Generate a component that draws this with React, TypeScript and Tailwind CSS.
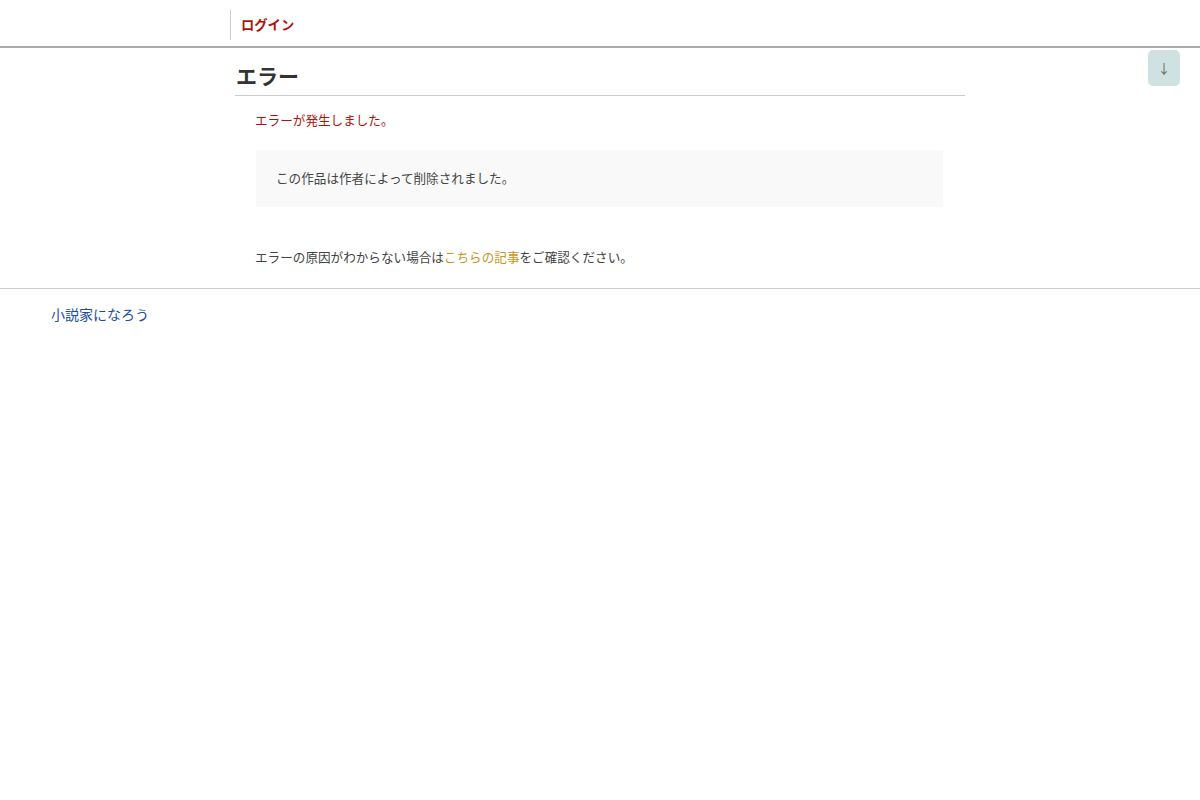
import React from 'react';

const font = "font-['Noto_Sans_CJK_JP','Noto_Sans',sans-serif]";

export default function App() {
    return (
        <div className={`min-h-[800px] bg-white text-[#444] ${font}`}>
            <header className="h-[48px] border-b-2 border-[#aaa] flex items-center pt-[3px]">
                <div className="ml-[230px] border-l border-[#ccc] h-[30px] flex items-center pl-[10px]">
                    <a className="text-[#b0120a] font-bold text-[13.3px]">ログイン</a>
                </div>
            </header>
            <div className="relative">
                <button className="absolute right-[20px] top-[2px] w-[32px] h-[36px] rounded-[5px] bg-[#cfe1e1] text-[#666] text-[13px] flex items-center justify-center">
                    ↓
                </button>
                <main className="w-[730px] ml-[235px] pb-[21px]">
                    <h1 className="text-[21px] font-bold text-[#333] pt-[12px] pb-[5px] pl-[1px] border-b border-[#ccc] leading-[30px]">
                        エラー
                    </h1>
                    <div className="px-[20px]">
                        <p className="text-[12.6px] text-[#b0120a] mt-[14px] leading-[20px]">エラーが発生しました。</p>
                        <div className="mt-[20px] bg-[#f9f9f9] h-[57px] flex items-center px-[20px] mr-[2px] ml-[1px]">
                            <p className="text-[12.6px] text-[#444]">この作品は作者によって削除されました。</p>
                        </div>
                        <p className="text-[12.6px] text-[#444] mt-[40px] leading-[20px]">
                            エラーの原因がわからない場合は<a className="text-[#c9961a]">こちらの記事</a>をご確認ください。
                        </p>
                    </div>
                </main>
            </div>
            <footer className="border-t border-[#ccc] pt-[12px] pl-[51px]">
                <a className="text-[14px] text-[#1a4fa0]">小説家になろう</a>
            </footer>
        </div>
    );
}
